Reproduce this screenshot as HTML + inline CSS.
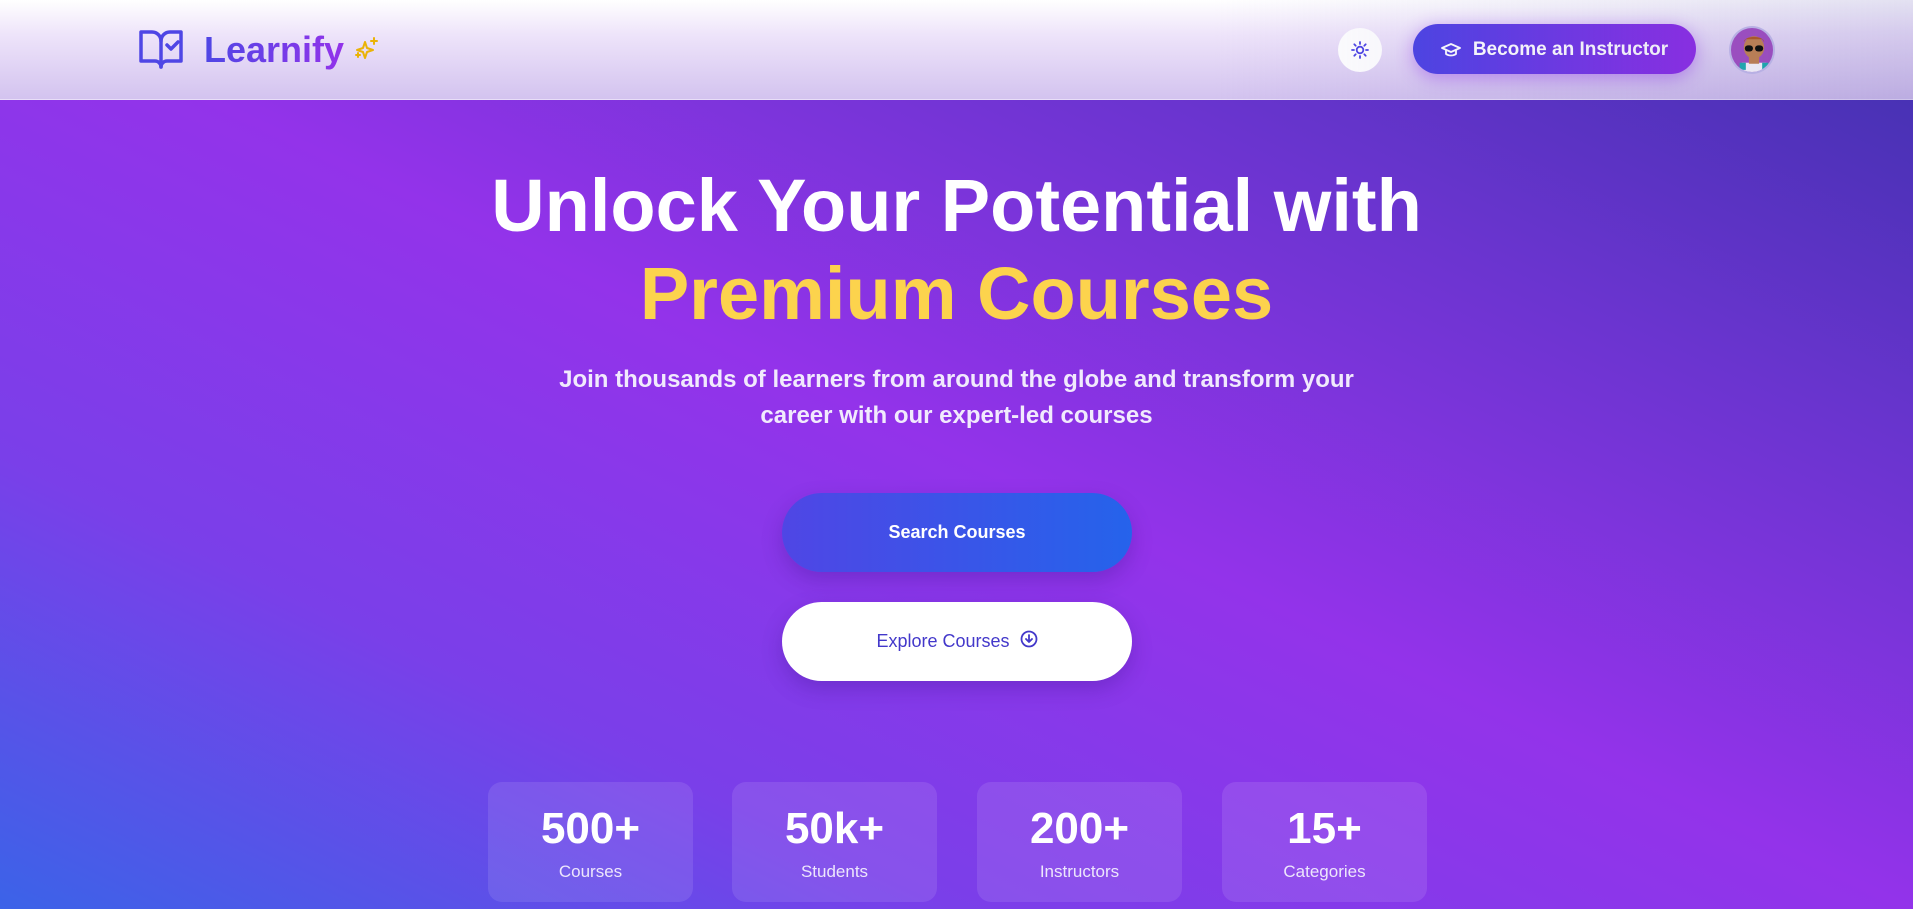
<!DOCTYPE html>
<html><head><meta charset="utf-8"><style>
*{margin:0;padding:0;box-sizing:border-box}
body{width:1913px;height:909px;overflow:hidden;font-family:"Liberation Sans",sans-serif;position:relative;
background:linear-gradient(to top right,#3b63e8 0%,#7a3fe9 25%,#9333ea 50%,#6a34cf 75%,#3f31ad 100%);}
.hdr{position:absolute;left:0;top:0;width:1913px;height:100px;background:linear-gradient(to bottom,#ffffff 0%,#eee4fa 35%,#d3c3ef 100%);border-bottom:1px solid #e8def8}
.hdr:after{content:"";position:absolute;right:0;top:0;width:700px;height:100px;background:linear-gradient(to right,rgba(200,196,228,0),rgba(200,196,228,.5));mix-blend-mode:multiply;pointer-events:none}
.logo{position:absolute;left:138px;top:29px;display:flex;align-items:center}
.logo .t{font-size:36px;font-weight:700;margin-left:20px;background:linear-gradient(to right,#4f46e5,#9333ea);-webkit-background-clip:text;color:transparent}
.sun{position:absolute;left:1338px;top:28px;width:44px;height:44px;border-radius:50%;background:#fff;display:flex;align-items:center;justify-content:center}
.bi{position:absolute;left:1413px;top:24px;width:283px;height:50px;border-radius:25px;background:linear-gradient(to right,#4f46e5,#9333ea);box-shadow:0 4px 18px rgba(147,51,234,.45);color:#fff;font-size:19px;font-weight:700;display:flex;align-items:center;justify-content:center;gap:12px;padding-top:2px}
.av{position:absolute;left:1729px;top:26px;width:46px;height:48px;border-radius:50%;background:#a855c7;border:2px solid #c9c2ee;overflow:hidden}
h1{position:absolute;left:0;width:1913px;top:162px;text-align:center;color:#fff;font-size:74px;font-weight:700;line-height:88px}
h1 span{color:#fcd34d}
.sub{position:absolute;left:0;width:1913px;top:362px;text-align:center;color:#f1eafd;font-size:24px;font-weight:700;line-height:36px}
.btn{position:absolute;left:782px;width:350px;height:79px;border-radius:40px;display:flex;align-items:center;justify-content:center;font-size:18px}
.s{top:493px;background:linear-gradient(to right,#4f46e5,#2563eb);color:#fff;font-weight:700;box-shadow:0 8px 20px rgba(60,20,140,.3)}
.e{top:602px;background:#fff;color:#4338ca;gap:10px;box-shadow:0 8px 20px rgba(60,20,140,.3)}
.st{position:absolute;top:782px;width:205px;height:120px;border-radius:14px;background:rgba(255,255,255,.1);color:#fff;text-align:center}
.st b{display:block;font-size:44px;margin-top:22px;line-height:50px}
.st i{display:block;font-style:normal;font-size:17px;margin-top:8px;color:#ede6fc}
</style></head><body>
<div class="hdr">
<div class="logo">
<svg width="46" height="42" viewBox="0 0 46 42" fill="none" stroke="#4f46e5" stroke-width="3.5" stroke-linejoin="round" stroke-linecap="round"><path d="M3 3h11a9 9 0 0 1 9 9v26a6 6 0 0 0-6-6H3z"/><path d="M23 12a9 9 0 0 1 9-9h11v29H29a6 6 0 0 0-6 6"/><path d="M29 16l4 4 7-7"/></svg>
<span class="t">Learnify</span>
<svg width="26" height="28" viewBox="0 0 26 28" style="margin-left:10px" fill="none" stroke="#eab308" stroke-width="2" stroke-linejoin="round"><path d="M11 6l2 6 6 2-6 2-2 6-2-6-6-2 6-2z"/><path d="M20 2v6M17 5h6M4 17v4M2 19h4" stroke-linecap="round"/></svg>
</div>
<div class="sun"><svg width="18" height="18" viewBox="0 0 18 18" stroke="#4f46e5" stroke-width="1.8" fill="none" stroke-linecap="round"><circle cx="9" cy="9" r="3.3"/><path d="M9 1v2M9 15v2M1 9h2M15 9h2M3.3 3.3l1.4 1.4M13.3 13.3l1.4 1.4M3.3 14.7l1.4-1.4M13.3 4.7l1.4-1.4"/></svg></div>
<div class="bi"><svg width="20" height="16" viewBox="0 0 20 16" fill="none" stroke="#fff" stroke-width="1.8" stroke-linejoin="round"><path d="M1 6l9-4 9 4-9 4z"/><path d="M5 8v4c3 2 7 2 10 0V8"/></svg>Become an Instructor</div>
<div class="av"><svg width="46" height="48" viewBox="0 0 44 47"><rect x="10" y="34" width="24" height="14" fill="#fff"/><rect x="8" y="34" width="6" height="7" fill="#22b5b5"/><rect x="30" y="34" width="6" height="7" fill="#22b5b5"/><rect x="17" y="27" width="10" height="8" fill="#c98a5a"/><ellipse cx="22" cy="19" rx="10" ry="11" fill="#c98a5a"/><path d="M12 14c0-7 20-7 20 0l-2-3h-16z" fill="#b8602e"/><rect x="13" y="17" width="8" height="6" rx="3" fill="#111"/><rect x="23" y="17" width="8" height="6" rx="3" fill="#111"/></svg></div>
</div>
<h1>Unlock Your Potential with<br><span>Premium Courses</span></h1>
<div class="sub">Join thousands of learners from around the globe and transform your<br>career with our expert-led courses</div>
<div class="btn s">Search Courses</div>
<div class="btn e">Explore Courses <svg width="18" height="18" viewBox="0 0 18 18" fill="none" stroke="#4338ca" stroke-width="1.8" stroke-linecap="round" stroke-linejoin="round" style="margin-top:-6px"><circle cx="9" cy="9" r="7.5"/><path d="M9 5v7M6 9l3 3 3-3"/></svg></div>
<div class="st" style="left:488px"><b>500+</b><i>Courses</i></div>
<div class="st" style="left:732px"><b>50k+</b><i>Students</i></div>
<div class="st" style="left:977px"><b>200+</b><i>Instructors</i></div>
<div class="st" style="left:1222px"><b>15+</b><i>Categories</i></div>
</body></html>
